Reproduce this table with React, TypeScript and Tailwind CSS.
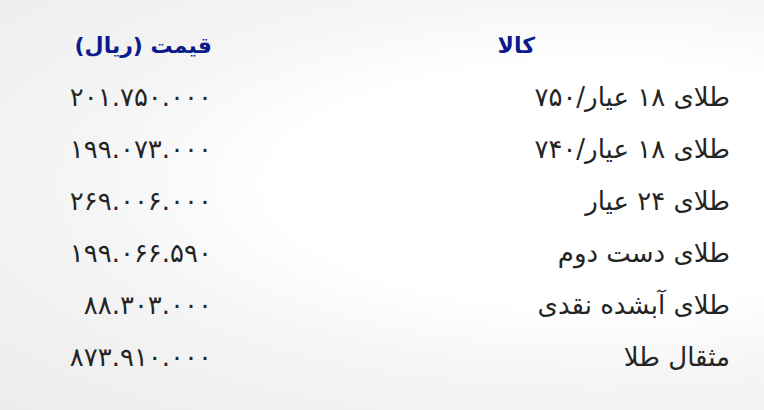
import { Fragment } from "react";

const rows = [
  { name: "طلای ۱۸ عیار/۷۵۰", price: "۲۰۱.۷۵۰.۰۰۰" },
  { name: "طلای ۱۸ عیار/۷۴۰", price: "۱۹۹.۰۷۳.۰۰۰" },
  { name: "طلای ۲۴ عیار", price: "۲۶۹.۰۰۶.۰۰۰" },
  { name: "طلای دست دوم", price: "۱۹۹.۰۶۶.۵۹۰" },
  { name: "طلای آبشده نقدی", price: "۸۸.۳۰۳.۰۰۰" },
  { name: "مثقال طلا", price: "۸۷۳.۹۱۰.۰۰۰" },
];

export default function App() {
  return (
    <div
      dir="rtl"
      className="h-[410px] w-[764px] overflow-hidden bg-[radial-gradient(ellipse_at_78%_45%,#ffffff_0%,#ffffff_38%,#f5f5f5_60%,#ececec_100%)] pr-[34px] pt-[19px] font-['DejaVu_Sans',sans-serif]"
    >
      <div className="grid grid-cols-[518px_1fr] auto-rows-[52px]">
        <div className="flex items-center pr-[195px] text-[22px] font-bold text-[#0b1a8c]">کالا</div>
        <div className="flex items-center text-[22px] font-bold text-[#0b1a8c]">قیمت (ریال)</div>
        {rows.map((r) => (
          <Fragment key={r.name}>
            <div className="flex items-center text-[26px] text-[#242424]">{r.name}</div>
            <div className="flex items-center text-[26px] text-[#242424]">{r.price}</div>
          </Fragment>
        ))}
      </div>
    </div>
  );
}
